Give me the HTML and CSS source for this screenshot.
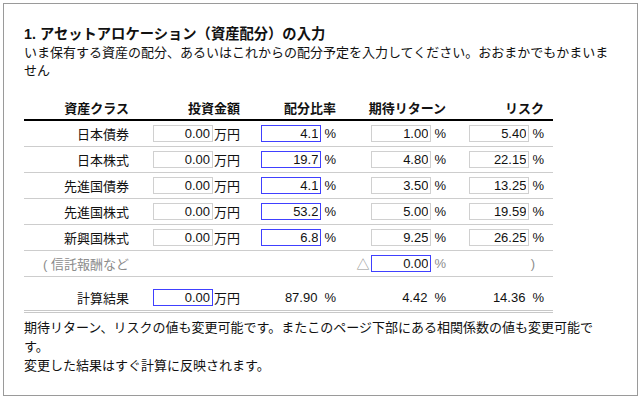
FILE: index.html
```html
<!DOCTYPE html>
<html lang="ja">
<head>
<meta charset="utf-8">
<title>アセットアロケーション</title>
<link rel="stylesheet" href="styles.css">
</head>
<body>
<div class="panel">
  <h2 class="title">1. アセットアロケーション（資産配分）の入力</h2>
  <p class="lead">いま保有する資産の配分、あるいはこれからの配分予定を入力してください。おおまかでもかまいません</p>
  <table class="alloc">
    <colgroup>
      <col class="c1"><col class="c2"><col class="c3"><col class="c4"><col class="c5">
    </colgroup>
    <thead>
      <tr><th>資産クラス</th><th>投資金額</th><th>配分比率</th><th>期待リターン</th><th>リスク</th></tr>
    </thead>
    <tbody>
      <tr>
        <td><div class="f">日本債券</div></td>
        <td><div class="f"><input class="in" value="0.00"><span class="unit">万円</span></div></td>
        <td><div class="f"><input class="in blue" value="4.1"><span class="pct">%</span></div></td>
        <td><div class="f"><input class="in" value="1.00"><span class="pct">%</span></div></td>
        <td><div class="f"><input class="in" value="5.40"><span class="pct">%</span></div></td>
      </tr>
      <tr>
        <td><div class="f">日本株式</div></td>
        <td><div class="f"><input class="in" value="0.00"><span class="unit">万円</span></div></td>
        <td><div class="f"><input class="in blue" value="19.7"><span class="pct">%</span></div></td>
        <td><div class="f"><input class="in" value="4.80"><span class="pct">%</span></div></td>
        <td><div class="f"><input class="in" value="22.15"><span class="pct">%</span></div></td>
      </tr>
      <tr>
        <td><div class="f">先進国債券</div></td>
        <td><div class="f"><input class="in" value="0.00"><span class="unit">万円</span></div></td>
        <td><div class="f"><input class="in blue" value="4.1"><span class="pct">%</span></div></td>
        <td><div class="f"><input class="in" value="3.50"><span class="pct">%</span></div></td>
        <td><div class="f"><input class="in" value="13.25"><span class="pct">%</span></div></td>
      </tr>
      <tr>
        <td><div class="f">先進国株式</div></td>
        <td><div class="f"><input class="in" value="0.00"><span class="unit">万円</span></div></td>
        <td><div class="f"><input class="in blue" value="53.2"><span class="pct">%</span></div></td>
        <td><div class="f"><input class="in" value="5.00"><span class="pct">%</span></div></td>
        <td><div class="f"><input class="in" value="19.59"><span class="pct">%</span></div></td>
      </tr>
      <tr>
        <td><div class="f">新興国株式</div></td>
        <td><div class="f"><input class="in" value="0.00"><span class="unit">万円</span></div></td>
        <td><div class="f"><input class="in blue" value="6.8"><span class="pct">%</span></div></td>
        <td><div class="f"><input class="in" value="9.25"><span class="pct">%</span></div></td>
        <td><div class="f"><input class="in" value="26.25"><span class="pct">%</span></div></td>
      </tr>
      <tr class="fee">
        <td><div class="f muted">(&nbsp;信託報酬など</div></td>
        <td><div class="f"></div></td>
        <td><div class="f"></div></td>
        <td><div class="f"><span class="tri muted">△</span><input class="in blue" value="0.00"><span class="pct muted">%</span></div></td>
        <td><div class="f"><span class="paren muted">)</span></div></td>
      </tr>
      <tr class="total">
        <td><div class="f">計算結果</div></td>
        <td><div class="f"><input class="in blue" value="0.00"><span class="unit">万円</span></div></td>
        <td><div class="f"><span class="val">87.90</span><span class="pct">%</span></div></td>
        <td><div class="f"><span class="val">4.42</span><span class="pct">%</span></div></td>
        <td><div class="f"><span class="val">14.36</span><span class="pct">%</span></div></td>
      </tr>
    </tbody>
  </table>
  <p class="note">期待リターン、リスクの値も変更可能です。またこのページ下部にある相関係数の値も変更可能です。<br>変更した結果はすぐ計算に反映されます。</p>
</div>
</body>
</html>
```

FILE: styles.css
```css
html, body {
  margin: 0;
  padding: 0;
  background: #fff;
}

body {
  font-family: "Liberation Sans", "Noto Sans CJK JP", sans-serif;
  font-size: 13px;
  color: #111;
}

.panel {
  margin: 3px;
  height: 393px;
  box-sizing: border-box;
  border: 1px solid #9a9a9a;
  padding: 21px 20px 20px 20px;
}

.title {
  margin: 0;
  font-size: 14.3px;
  font-weight: bold;
  line-height: 18.67px;
  color: #111;
}

.lead {
  margin: 0;
  line-height: 18.67px;
}

.alloc {
  margin-top: 18px;
  width: 529px;
  table-layout: fixed;
  border-collapse: separate;
  border-spacing: 0;
}

.c1 { width: 114px; }
.c2 { width: 111px; }
.c3 { width: 96px; }
.c4 { width: 110px; }
.c5 { width: 98px; }

.alloc th {
  height: 20px;
  padding: 0 9px 0 0;
  line-height: 20px;
  text-align: right;
  font-weight: bold;
  border-bottom: 2px solid #000;
  white-space: nowrap;
}

.alloc td {
  padding: 0 9px 0 0;
  border-bottom: 1px solid #cdcdcd;
}

.f {
  height: 25px;
  display: flex;
  align-items: center;
  justify-content: flex-end;
  white-space: nowrap;
}

.in {
  width: 60px;
  height: 17px;
  box-sizing: border-box;
  margin: 0;
  padding: 0 2px;
  border: 1px solid #d0d0d0;
  background: #fff;
  color: #111;
  font-family: "Liberation Sans", "Noto Sans CJK JP", sans-serif;
  font-size: 13px;
  text-align: right;
  outline: none;
}

.in.blue {
  border: 1px solid #4040ff;
}

.unit {
  margin-left: 1px;
}

.pct {
  margin-left: 3px;
}

.val {
  width: 60px;
  box-sizing: border-box;
  padding-right: 4px;
  text-align: right;
}

.muted {
  color: #8c8c8c;
}

.tri {
  margin-right: 2px;
  font-family: "Noto Sans CJK JP", sans-serif;
}

.paren {
  margin-right: 9px;
}

.total td {
  padding-top: 8px;
  border-bottom: 3px double #c8c8c8;
}

.note {
  margin: 5px 0 0 0;
  line-height: 19.2px;
}
```
